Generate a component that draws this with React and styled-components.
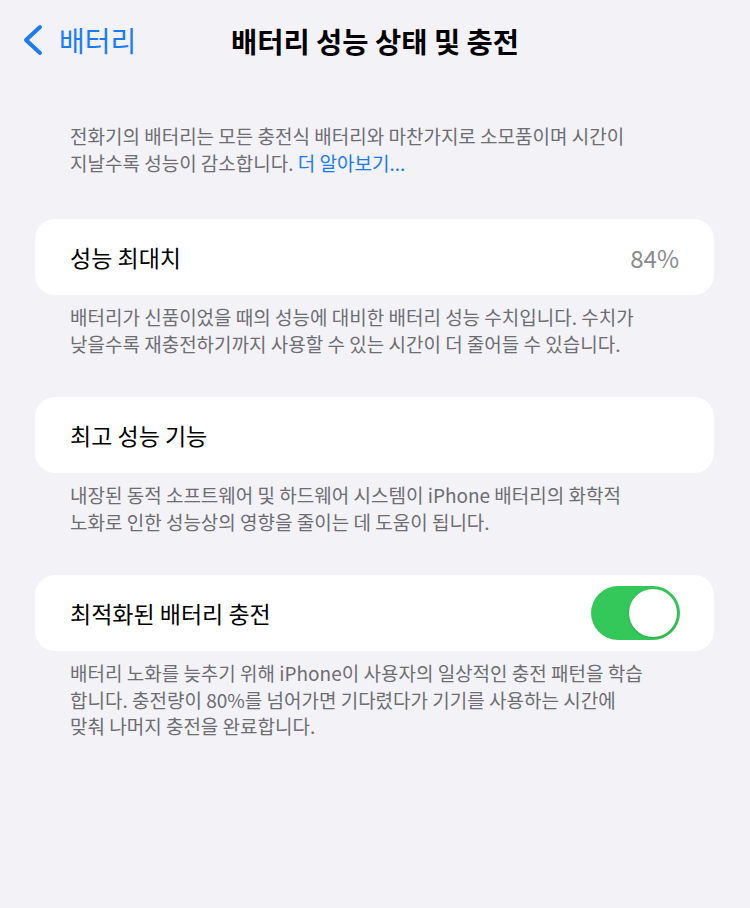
import React from 'react';
import styled, { createGlobalStyle } from 'styled-components';

const GlobalStyle = createGlobalStyle`
  html, body {
    margin: 0;
    padding: 0;
    background: #f2f2f7;
  }
  body {
    font-family: "Noto Sans CJK KR", "Noto Sans", sans-serif;
    -webkit-font-smoothing: antialiased;
  }
`;

const Page = styled.div`
  width: 750px;
  min-height: 908px;
  background: #f2f2f7;
`;

const Header = styled.header`
  position: relative;
  height: 80px;
  display: flex;
  align-items: center;
  justify-content: center;
`;

const Back = styled.div`
  position: absolute;
  left: 20px;
  top: 0;
  height: 80px;
  display: flex;
  align-items: center;
  gap: 15px;
  color: #1a7cf5;
  font-size: 28px;
`;

const Title = styled.h1`
  margin: 0;
  font-size: 28.5px;
  font-weight: 700;
  color: #000;
`;

const Note = styled.p`
  margin: ${(p) => p.$margin};
  padding: 0 60px 0 70px;
  font-size: 19px;
  line-height: 26.5px;
  color: #6d6d72;
  white-space: nowrap;
`;

const Link = styled.span`
  color: #1a7cf5;
`;

const Card = styled.div`
  margin: ${(p) => p.$margin};
  margin-left: 35px;
  margin-right: 36px;
  height: 76px;
  background: #fff;
  border-radius: 20px;
  display: flex;
  align-items: center;
  justify-content: space-between;
  padding: 0 35px;
  box-sizing: border-box;
`;

const Label = styled.span`
  font-size: 23px;
  color: #000;
`;

const Value = styled.span`
  font-size: 24px;
  color: #8a8a8e;
`;

const Toggle = styled.div`
  width: 89px;
  height: 54px;
  border-radius: 27px;
  background: #34c759;
  position: relative;
  margin-right: -1px;
`;

const Knob = styled.div`
  position: absolute;
  right: 3px;
  top: 3px;
  width: 48px;
  height: 48px;
  border-radius: 50%;
  background: #fff;
  box-shadow: 0 1px 3px rgba(0, 0, 0, 0.15);
`;

const Chevron = () => (
  <svg width="24" height="32" viewBox="0 0 24 32" fill="none">
    <path d="M20 3 L6 16 L20 29" stroke="#1a7cf5" strokeWidth="4" strokeLinecap="round" strokeLinejoin="round" />
  </svg>
);

export default function App() {
  return (
    <Page>
      <GlobalStyle />
      <Header>
        <Back>
          <Chevron />
          <span>배터리</span>
        </Back>
        <Title>배터리 성능 상태 및 충전</Title>
      </Header>

      <Note $margin="43px 0 0">
        전화기의 배터리는 모든 충전식 배터리와 마찬가지로 소모품이며 시간이
        <br />
        지날수록 성능이 감소합니다. <Link>더 알아보기...</Link>
      </Note>

      <Card $margin="43px 0 0">
        <Label>성능 최대치</Label>
        <Value>84%</Value>
      </Card>
      <Note $margin="9px 0 0">
        배터리가 신품이었을 때의 성능에 대비한 배터리 성능 수치입니다. 수치가
        <br />
        낮을수록 재충전하기까지 사용할 수 있는 시간이 더 줄어들 수 있습니다.
      </Note>

      <Card $margin="40px 0 0">
        <Label>최고 성능 기능</Label>
      </Card>
      <Note $margin="9px 0 0">
        내장된 동적 소프트웨어 및 하드웨어 시스템이 iPhone 배터리의 화학적
        <br />
        노화로 인한 성능상의 영향을 줄이는 데 도움이 됩니다.
      </Note>

      <Card $margin="40px 0 0">
        <Label>최적화된 배터리 충전</Label>
        <Toggle>
          <Knob />
        </Toggle>
      </Card>
      <Note $margin="9px 0 0">
        배터리 노화를 늦추기 위해 iPhone이 사용자의 일상적인 충전 패턴을 학습
        <br />
        합니다. 충전량이 80%를 넘어가면 기다렸다가 기기를 사용하는 시간에
        <br />
        맞춰 나머지 충전을 완료합니다.
      </Note>
    </Page>
  );
}
